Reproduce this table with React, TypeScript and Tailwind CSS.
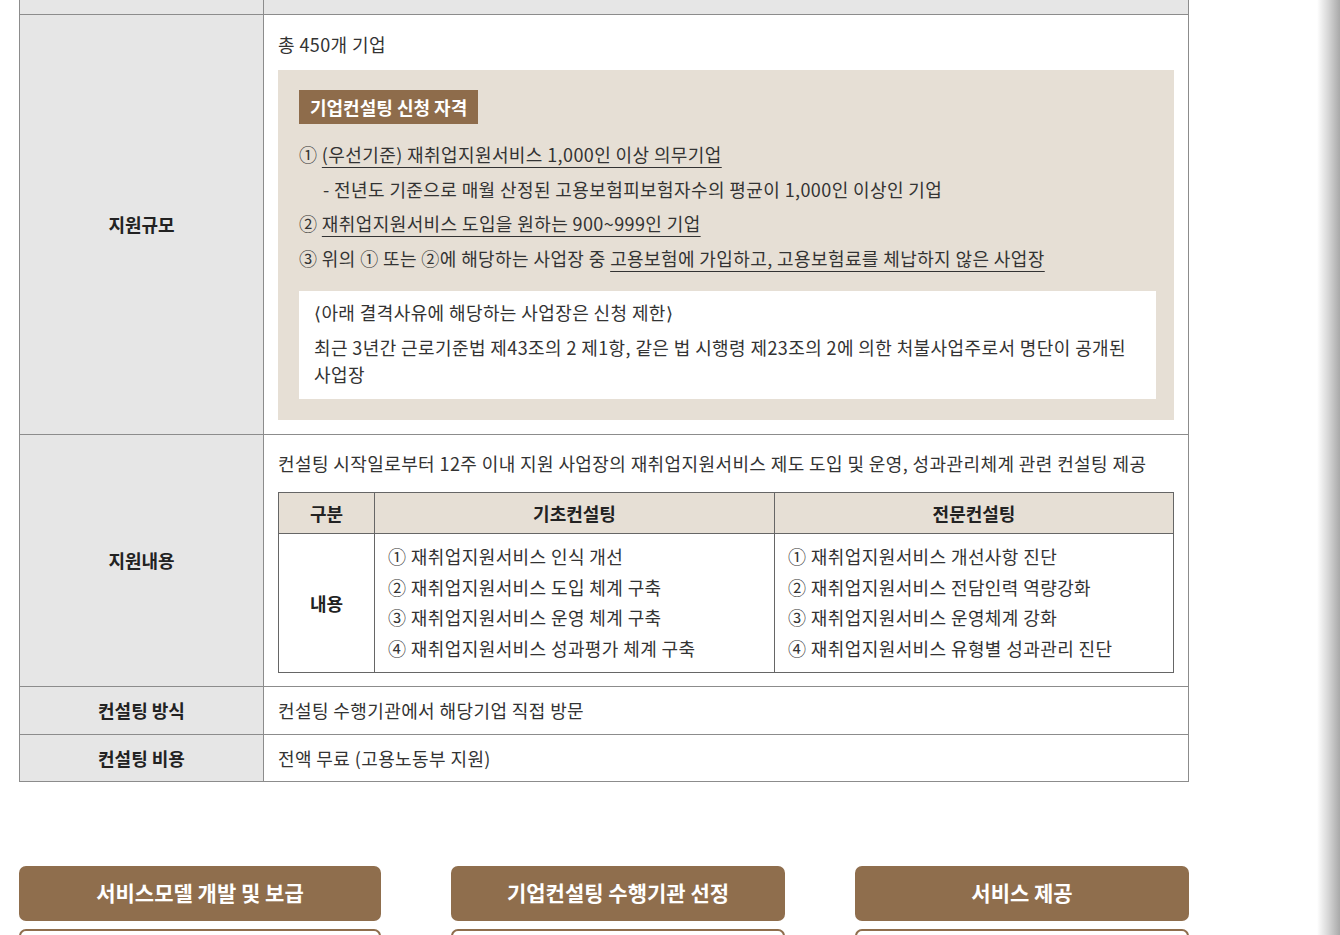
import React from "react";

const font = { fontFamily: '"Noto Sans CJK KR", "Noto Sans", sans-serif' };

const basic = [
  "① 재취업지원서비스 인식 개선",
  "② 재취업지원서비스 도입 체계 구축",
  "③ 재취업지원서비스 운영 체계 구축",
  "④ 재취업지원서비스 성과평가 체계 구축",
];

const expert = [
  "① 재취업지원서비스 개선사항 진단",
  "② 재취업지원서비스 전담인력 역량강화",
  "③ 재취업지원서비스 운영체계 강화",
  "④ 재취업지원서비스 유형별 성과관리 진단",
];

function Row({ label, children, className = "" }: { label: string; children: React.ReactNode; className?: string }) {
  return (
    <div className={`flex border-b border-[#8c8c8c] ${className}`}>
      <div className="w-[244px] shrink-0 bg-[#e6e6e6] border-r border-[#8c8c8c] flex items-center justify-center text-[18px] font-bold text-[#222]">
        {label}
      </div>
      <div className="flex-1 min-w-0 tracking-[0.4px] break-keep">{children}</div>
    </div>
  );
}

export default function App() {
  return (
    <div className="h-[935px] overflow-hidden bg-white flex text-[#333]" style={font}>
      <div className="flex-1 min-w-0 pl-[19px]">
        <div className="w-[1170px]">
          {/* table */}
          <div className="mt-[-33px] border-l border-r border-[#8c8c8c]">
            <div className="flex h-[48px] border-b border-[#8c8c8c] bg-[#e6e6e6] text-[18px] font-bold text-[#222]">
              <div className="w-[244px] shrink-0 border-r border-[#8c8c8c] flex items-center justify-center">구분</div>
              <div className="flex-1 flex items-center justify-center">내용</div>
            </div>

            <Row label="지원규모">
              <div className="px-[14px] pt-[14px] pb-[14px]">
                <p className="text-[18px] leading-[30px]">총 450개 기업</p>
                <div className="mt-[11px] bg-[#e6dfd5] pl-[21px] pr-[18px] pt-[20px] pb-[21px]">
                  <span className="inline-block bg-[#8e6c4b] text-white font-bold text-[18px] leading-[34px] px-[11px] tracking-normal">
                    기업컨설팅 신청 자격
                  </span>
                  <ul className="mt-[13px] text-[18px] leading-[34.5px]">
                    <li>
                      ① <span className="underline underline-offset-[5px] decoration-1">(우선기준) 재취업지원서비스 1,000인 이상 의무기업</span>
                    </li>
                    <li className="pl-[24px]">- 전년도 기준으로 매월 산정된 고용보험피보험자수의 평균이 1,000인 이상인 기업</li>
                    <li>
                      ② <span className="underline underline-offset-[5px] decoration-1">재취업지원서비스 도입을 원하는 900~999인 기업</span>
                    </li>
                    <li>
                      ③ 위의 ① 또는 ②에 해당하는 사업장 중{" "}
                      <span className="underline underline-offset-[5px] decoration-1">고용보험에 가입하고, 고용보험료를 체납하지 않은 사업장</span>
                    </li>
                  </ul>
                  <div className="mt-[16px] bg-white px-[15px] pt-[8px] pb-[11px] text-[18px] leading-[27px]">
                    <p className="mb-[8px]">⟨아래 결격사유에 해당하는 사업장은 신청 제한⟩</p>
                    <p>최근 3년간 근로기준법 제43조의 2 제1항, 같은 법 시행령 제23조의 2에 의한 처불사업주로서 명단이 공개된 사업장</p>
                  </div>
                </div>
              </div>
            </Row>

            <Row label="지원내용">
              <div className="px-[14px] pt-[13px] pb-[13px]">
                <p className="text-[18px] leading-[30px]">
                  컨설팅 시작일로부터 12주 이내 지원 사업장의 재취업지원서비스 제도 도입 및 운영, 성과관리체계 관련 컨설팅 제공
                </p>
                <div className="mt-[14px] border border-[#666] text-[18px]">
                  <div className="grid grid-cols-[96px_400px_1fr] bg-[#e6dfd5] border-b border-[#666] h-[41px] font-bold text-[#222] tracking-normal">
                    <div className="flex items-center justify-center border-r border-[#666]">구분</div>
                    <div className="flex items-center justify-center border-r border-[#666]">기초컨설팅</div>
                    <div className="flex items-center justify-center">전문컨설팅</div>
                  </div>
                  <div className="grid grid-cols-[96px_400px_1fr] h-[138px]">
                    <div className="flex items-center justify-center border-r border-[#666] font-bold text-[#222] tracking-normal">내용</div>
                    <ul className="border-r border-[#666] px-[13px] flex flex-col justify-center leading-[30.5px] pb-[2px]">
                      {basic.map((t) => (
                        <li key={t}>{t}</li>
                      ))}
                    </ul>
                    <ul className="px-[13px] flex flex-col justify-center leading-[30.5px] pb-[2px]">
                      {expert.map((t) => (
                        <li key={t}>{t}</li>
                      ))}
                    </ul>
                  </div>
                </div>
              </div>
            </Row>

            <Row label="컨설팅 방식" className="h-[48px]">
              <div className="h-full flex items-center px-[14px] text-[18px]">컨설팅 수행기관에서 해당기업 직접 방문</div>
            </Row>
            <Row label="컨설팅 비용" className="h-[47px]">
              <div className="h-full flex items-center px-[14px] text-[18px]">전액 무료 (고용노동부 지원)</div>
            </Row>
          </div>

          {/* steps */}
          <div className="mt-[84px] flex justify-between">
            {[
              { t: "서비스모델 개발 및 보급", w: "w-[362px]" },
              { t: "기업컨설팅 수행기관 선정", w: "w-[334px]" },
              { t: "서비스 제공", w: "w-[334px]" },
            ].map((s) => (
              <div key={s.t} className={`${s.w} flex flex-col gap-[8px]`}>
                <div className="h-[55px] rounded-[7px] bg-[#8f6e4d] text-white font-bold text-[21px] flex items-center justify-center pb-[2px]">
                  {s.t}
                </div>
                <div className="h-[40px] rounded-[7px] border-2 border-[#8f6e4d] bg-white" />
              </div>
            ))}
          </div>
        </div>
      </div>
      <div className="w-[23px] shrink-0 bg-gradient-to-r from-white via-[#d6d6d6] to-[#a9a9a9]" />
    </div>
  );
}
